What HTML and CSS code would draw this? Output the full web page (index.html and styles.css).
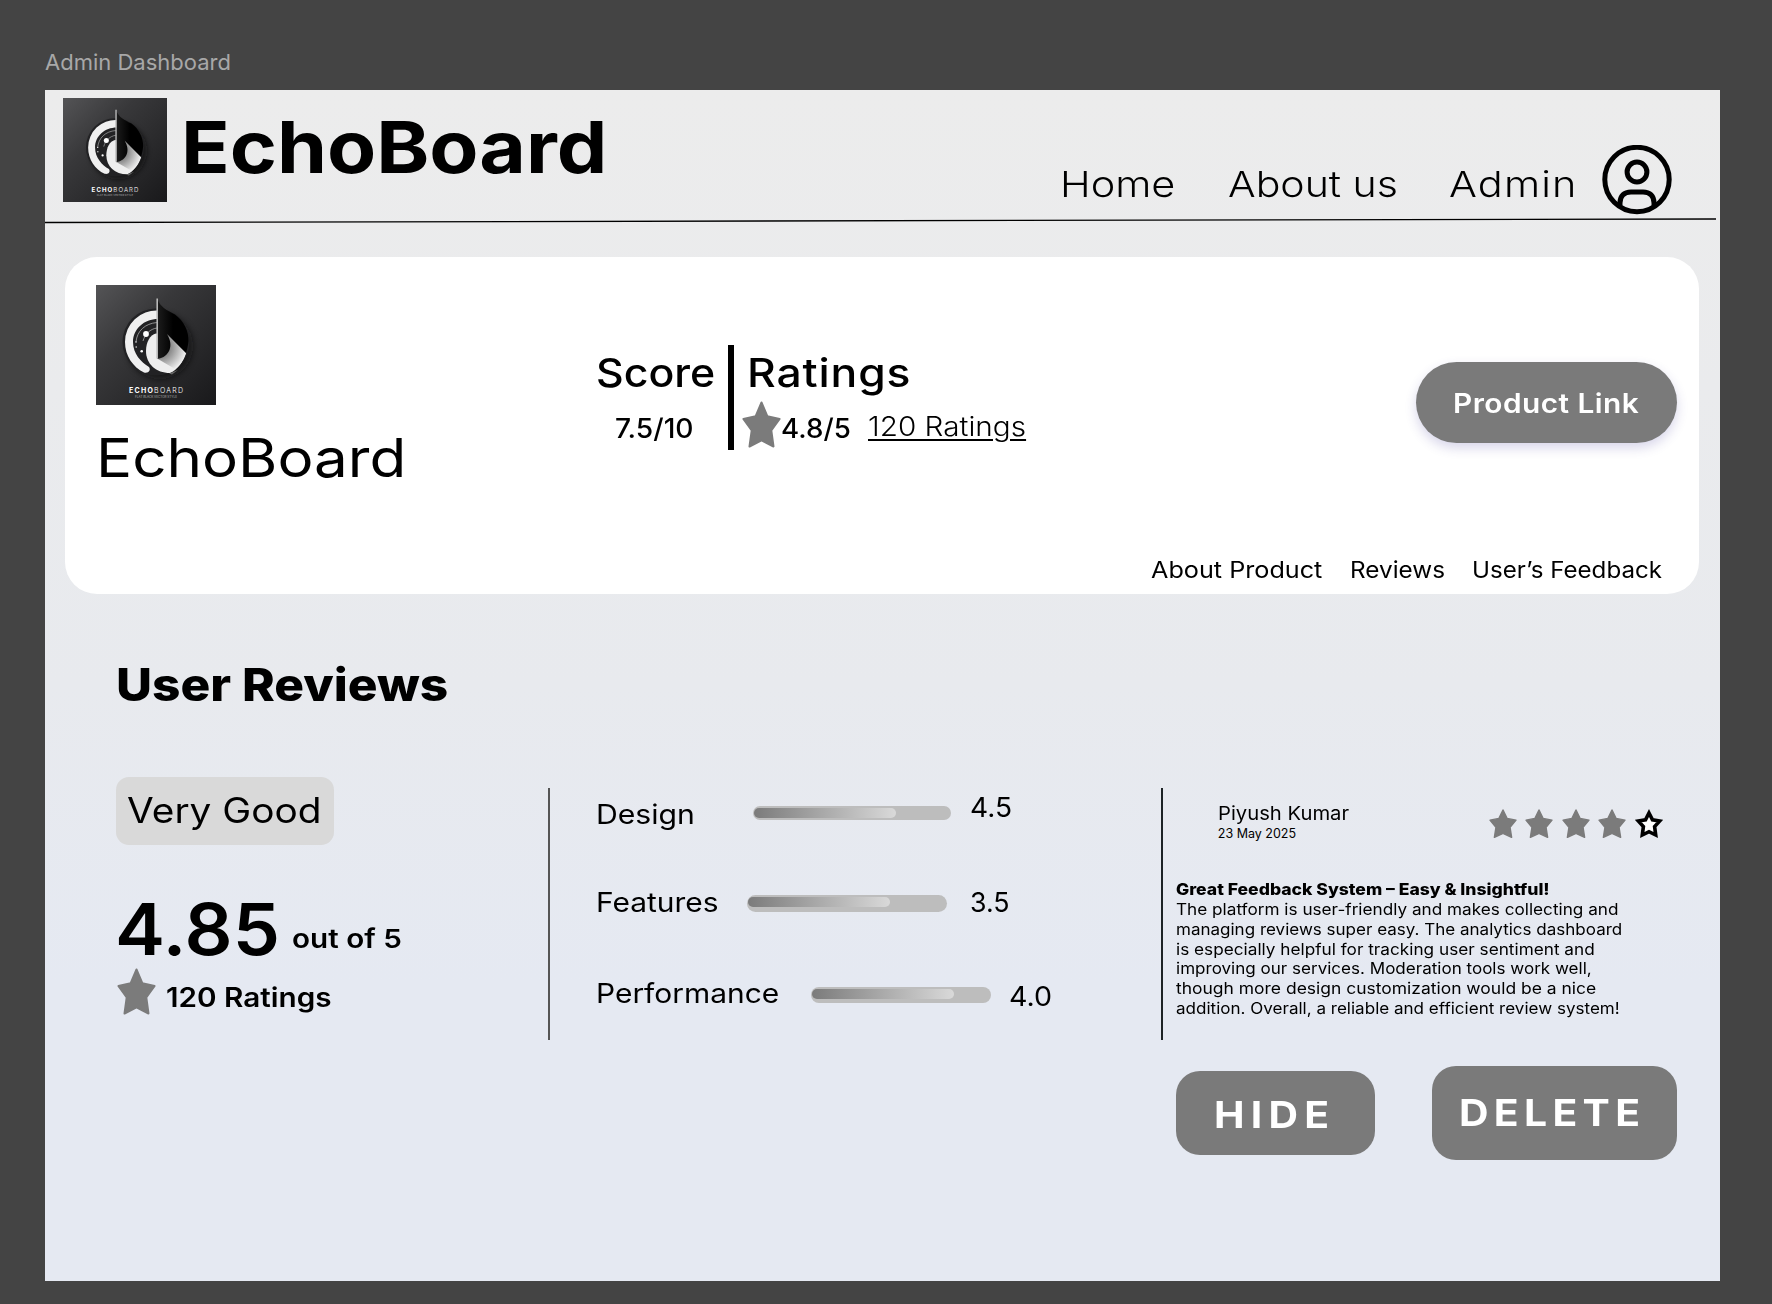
FILE: index.html
```html
<!DOCTYPE html>
<html lang="en">
<head>
<meta charset="utf-8">
<title>EchoBoard – Admin Dashboard</title>
<link rel="stylesheet" href="styles.css">
</head>
<body>
<svg class="defs" width="0" height="0" aria-hidden="true">
  <defs>
    <linearGradient id="tile" x1="0" y1="0" x2="1" y2="1"><stop offset="0" stop-color="#545456"/><stop offset=".35" stop-color="#38383a"/><stop offset="1" stop-color="#19191b"/></linearGradient>
    <linearGradient id="blade" x1="0" y1="0" x2="1" y2="0"><stop offset="0" stop-color="#1c1c1c"/><stop offset=".5" stop-color="#000"/></linearGradient>
    <radialGradient id="fold" gradientUnits="userSpaceOnUse" cx="64" cy="62" r="26"><stop offset=".3" stop-color="#777"/><stop offset="1" stop-color="#ededed"/></radialGradient>
    <filter id="soft" x="-30%" y="-30%" width="160%" height="160%"><feGaussianBlur stdDeviation="3"/></filter>
    <symbol id="logo" viewBox="0 0 120 120">
      <rect width="120" height="120" fill="url(#tile)"/>
      <circle cx="64" cy="61" r="33" fill="#0d0d0e" opacity=".65" filter="url(#soft)"/>
      <circle cx="60" cy="57" r="33.5" fill="#222224"/>
      <path d="M62 25.500A31.500 31.500 0 0 0 29 57C29 71 37 82 48 87.500C53 88.500 55 85 53 82C45 77 37 69 37 57C37 44 48 34 62 34Z" fill="#f0f0f0"/>
      <path d="M40 57C41 46 49 38.500 61 37.500M47 56C49 49 54 44 61 43" fill="none" stroke="#aaa" stroke-width=".8"/>
      <circle cx="50" cy="49" r="2.900" fill="#fff"/><circle cx="45.700" cy="66.300" r="1.300" fill="#fff"/><circle cx="40" cy="57" r=".8" fill="#ddd"/><circle cx="40.200" cy="62" r=".8" fill="#ddd"/>
      <path d="M60 48.500C54 50 50 57 50 66C50 79 60 88 74 88C81 85 87 77 90 68L71 49Z" fill="#eee"/>
      <path d="M71 49L90 68C88 75 84 81 79 84L62 74C71 69 76 60 71 49Z" fill="url(#fold)"/>
      <path d="M73 88.500L82 85L76 89.500Z" fill="#666"/>
      <path d="M61.500 14C64 22 71 25.500 79 29.500C88 36 93 47 92.500 56C92 61 91 65 90 68L71 49C78 60 74 72 61.500 74Z" fill="url(#blade)"/>
      <path d="M60.400 13.500H62V73.500H60.400Z" fill="#b9b9b9"/>
      <text x="33" y="108" class="logo-name" textLength="54"><tspan font-weight="700">ECHO</tspan><tspan font-weight="300">BOARD</tspan></text>
      <text x="39" y="113.200" class="logo-tag" textLength="42" lengthAdjust="spacingAndGlyphs">FLAT BLACK VECTOR STYLE</text>
    </symbol>
    <symbol id="star" viewBox="0 0 39 47" preserveAspectRatio="none">
      <path d="M19.500 1.500L25.300 15.200L37.600 18L29.300 29.300L31.500 45.500L19.500 39.300L7.500 45.500L9.700 29.300L1.400 18L13.700 15.200Z" fill="#7b7b7b" stroke="#7b7b7b" stroke-width="2" stroke-linejoin="round"/>
    </symbol>
  </defs>
</svg>

<div class="canvas-label">Admin Dashboard</div>
<div class="frame">
  <header class="topbar">
    <svg class="topbar-logo"><use href="#logo"/></svg>
    <h1 class="site-title wide">EchoBoard</h1>
    <nav class="nav">
      <a class="nav-home wide">Home</a>
      <a class="nav-about wide">About us</a>
      <a class="nav-admin wide">Admin</a>
      <svg class="profile" viewBox="0 0 70 70" fill="none" stroke="#000" stroke-width="5">
        <circle cx="35" cy="34.500" r="32.200"/>
        <circle cx="35" cy="27" r="9.900"/>
        <path d="M18 60.500V58C18 51 22 47 29 47H41C48 47 52 51 52 58V60.500"/>
      </svg>
    </nav>
    <svg class="topbar-rule" viewBox="0 0 1675 6"><path d="M0 4.500L1672 1" stroke="#000" stroke-width="1.300"/></svg>
  </header>

  <section class="card">
    <div class="card-main">
      <div class="brand">
        <svg class="brand-logo"><use href="#logo"/></svg>
        <div class="brand-name wide">EchoBoard</div>
      </div>
      <div class="score">
        <div class="stat-title score-title wide">Score</div>
        <div class="stat-value score-value wide">7.5/10</div>
      </div>
      <div class="stat-divider"></div>
      <div class="ratings">
        <div class="stat-title ratings-title wide">Ratings</div>
        <div class="ratings-row">
          <svg class="star-lg"><use href="#star"/></svg>
          <span class="stat-value wide">4.8/5</span>
          <a class="ratings-link wide">120 Ratings</a>
        </div>
      </div>
      <a class="product-link"><span class="wide">Product Link</span></a>
    </div>
    <nav class="card-links">
      <a class="link-about wide">About Product</a>
      <a class="link-reviews wide">Reviews</a>
      <a class="link-feedback wide">User’s Feedback</a>
    </nav>
  </section>

  <h2 class="section-title wide">User Reviews</h2>
  <section class="reviews">
    <div class="summary">
      <div class="badge"><span class="wide">Very Good</span></div>
      <div class="total"><span class="total-score wide">4.85</span><span class="total-max wide">out of 5</span></div>
      <div class="count"><svg class="star-lg"><use href="#star"/></svg><span class="count-text wide">120 Ratings</span></div>
    </div>
    <div class="rule"></div>
    <div class="metrics">
      <div class="metric design"><span class="metric-name wide">Design</span><span class="track"><span class="fill"></span></span><span class="metric-value wide">4.5</span></div>
      <div class="metric features"><span class="metric-name wide">Features</span><span class="track"><span class="fill"></span></span><span class="metric-value wide">3.5</span></div>
      <div class="metric performance"><span class="metric-name wide">Performance</span><span class="track"><span class="fill"></span></span><span class="metric-value wide">4.0</span></div>
    </div>
    <div class="rule rule-dark"></div>
    <article class="review">
      <div class="review-head">
        <div class="author">
          <div class="author-name wide">Piyush Kumar</div>
          <div class="author-date">23 May 2025</div>
        </div>
        <div class="stars">
          <svg class="star-sm"><use href="#star"/></svg>
          <svg class="star-sm"><use href="#star"/></svg>
          <svg class="star-sm"><use href="#star"/></svg>
          <svg class="star-sm"><use href="#star"/></svg>
          <svg class="star-sm" viewBox="0 0 28 29.300"><path d="M14 4L17.500 10.900L24.600 12.100L19.600 17.600L20.700 26L14 22.700L7.300 26L8.400 17.600L3.400 12.100L10.500 10.900Z" fill="#fff" stroke="#000" stroke-width="3.600"/></svg>
        </div>
      </div>
      <div class="review-title wide">Great Feedback System – Easy &amp; Insightful!</div>
      <p class="review-text">
        <span class="wide">The platform is user-friendly and makes collecting and</span>
        <span class="wide">managing reviews super easy. The analytics dashboard</span>
        <span class="wide">is especially helpful for tracking user sentiment and</span>
        <span class="wide">improving our services. Moderation tools work well,</span>
        <span class="wide">though more design customization would be a nice</span>
        <span class="wide">addition. Overall, a reliable and efficient review system!</span>
      </p>
      <div class="actions">
        <button class="btn btn-hide"><span class="wide">HIDE</span></button>
        <button class="btn btn-delete"><span class="wide">DELETE</span></button>
      </div>
    </article>
  </section>
</div>
</body>
</html>
```

FILE: styles.css
```css
* { box-sizing: border-box; }
body { margin: 0; height: 1304px; overflow: hidden; background: #444; color: #000; font-family: Inter, "Open Sans", sans-serif; white-space: nowrap; }
h1, h2, p { margin: 0; }
svg { display: block; flex: none; }
.defs { position: absolute; }

.wide { display: block; width: max-content; transform: scaleX(var(--w, 1.1)); transform-origin: 0 50%; }

.canvas-label { height: 90px; padding: 47px 0 0 45px; font-size: 22px; line-height: 30px; color: #a8a8a8; }
.frame { width: 1674.5px; height: 1191px; margin-left: 45px; background: linear-gradient(#ececec, #e8eaee 50%, #e5e9f2 75%, #e5e9f2); }

/* top bar */
.topbar { position: relative; display: flex; height: 132px; padding: 0 47.5px 0 18px; }
.topbar-logo { width: 104px; height: 104px; margin-top: 8px; }
.site-title { --w: 1.115; margin: 21px 0 0 13.7px; font-size: 72px; line-height: 72px; font-weight: 700; }
.nav { display: grid; grid-template-columns: 167.3px 221px 153px 70px; margin: 55px 0 0 auto; font-size: 36px; line-height: 44px; font-weight: 300; }
.nav a { padding-top: 16.8px; }
.nav-home { --w: 1.15; margin-left: -.6px; }
.nav-about { --w: 1.14; }
.nav-admin { --w: 1.15; letter-spacing: 1px; }
.profile { width: 70px; height: 70px; }
.topbar-rule { position: absolute; left: 0; bottom: -2px; width: 1674px; height: 6px; }
.logo-name { font-size: 7px; fill: #fff; }
.logo-tag { font-size: 2.8px; fill: #aaa; }

/* product card */
.card { width: 1634.5px; height: 336.3px; margin: 35.4px 0 0 19.5px; border-radius: 32px; background: #fff; }
.card-main { display: flex; align-items: flex-start; height: 298.3px; }
.brand { width: 531.5px; padding: 28px 0 0 31.5px; }
.brand-logo { width: 120px; height: 120px; }
.brand-name { --w: 1.122; margin: 22.8px 0 0 -.2px; font-size: 53.6px; line-height: 60px; font-weight: 440; }
.score { width: 132px; padding-top: 92px; }
.stat-title { font-size: 39.5px; line-height: 48px; font-weight: 450; }
.score-title { --w: 1.085; }
.ratings-title { --w: 1.125; margin-left: 6.5px; letter-spacing: .76px; }
.stat-value { --w: 1.026; font-size: 27px; line-height: 32px; font-weight: 500; }
.score-value { --w: 1.044; margin: 15.4px 0 0 19px; }
.stat-divider { width: 5.7px; height: 105px; margin-top: 87.5px; background: #000; }
.ratings { width: 300px; padding: 92px 0 0 7.3px; }
.ratings-row { display: grid; grid-template-columns: 39.3px 86.3px 1fr; margin: 3.5px 0 0 1px; }
.star-lg { width: 39px; height: 47px; }
.ratings-row .stat-value { padding-top: 11.9px; }
.ratings-link { --w: 1.1; padding-top: 9.9px; font-size: 27px; line-height: 32px; font-weight: 280; text-decoration: underline; text-decoration-thickness: 1.5px; text-underline-offset: 3px; }
.product-link { width: 260.7px; height: 81.3px; margin: 104.7px 22.5px 0 auto; padding-left: 37.5px; border-radius: 41px; background: #7a7a7a; color: #fff; font-size: 26.5px; line-height: 82px; font-weight: 570; letter-spacing: .4px; box-shadow: 0 5px 12px rgba(60, 50, 150, .2); }
.product-link .wide { --w: 1.125; }
.card-links { display: grid; grid-template-columns: 199.2px 121.5px 1fr; padding-left: 1086px; font-size: 22.6px; line-height: 28px; }
.link-about { --w: 1.115; }
.link-reviews { --w: 1.076; }
.link-feedback { --w: 1.068; margin-left: .7px; }

/* reviews */
.section-title { --w: 1.1025; margin: 64.5px 0 0 70.5px; font-size: 45px; line-height: 54px; font-weight: 800; }
.reviews { display: flex; align-items: flex-start; margin: 65.2px 0 0 71px; }
.summary { width: 432.3px; }
.badge { width: 218.2px; height: 67.5px; padding-left: 11px; border-radius: 13px; background: #d9d9d9; font-size: 35px; line-height: 67px; font-weight: 440; }
.badge .wide { --w: 1.108; }
.total { display: grid; grid-template-columns: 176px 1fr; height: 72px; margin-top: 48px; font-weight: 600; }
.total-score { --w: 1.059; margin-left: -.7px; font-size: 71px; line-height: 72px; }
.total-max { --w: 1.14; padding-top: 29.9px; font-size: 26px; line-height: 32px; font-weight: 570; }
.count { display: flex; margin: 3px 0 0 .6px; }
.count-text { --w: 1.12; margin: 12.7px 0 0 10px; font-size: 26.5px; line-height: 32px; font-weight: 570; }
.rule { width: 1.6px; height: 252px; margin-top: 11px; background: #555; }
.rule-dark { width: 1.3px; background: #1d2326; }

.metrics { width: 611.6px; padding: 14.9px 0 0 46.5px; }
.metric { display: grid; align-items: start; height: 32px; font-size: 27px; line-height: 32px; font-weight: 380; }
.design { grid-template-columns: 156.5px 198px 1fr; height: 39px; }
.features { grid-template-columns: 150.5px 200.5px 1fr; margin-top: 55.3px; }
.performance { grid-template-columns: 214.5px 180.5px 1fr; margin-top: 59.7px; }
.metric-name { --w: 1.108; }
.design .metric-name { --w: 1.117; padding-top: 7px; }
.track { height: 16.8px; margin-top: 8.4px; padding: 2.2px 1px; border-radius: 9px; background: #bdbdbd; }
.fill { display: block; width: 142px; height: 10px; border-radius: 5px; background: linear-gradient(90deg, #7b7b7b, #d9d9d9); }
.design .track { height: 14.3px; margin-top: 13.4px; }
.metric-value { --w: 1.042; margin-left: 19px; }
.features .metric-value { --w: .99; margin-left: 22.5px; }
.performance .metric-value { --w: 1.06; margin: 2.3px 0 0 17.2px; }

.review { padding-left: 13.5px; }
.review-head { display: flex; height: 102.7px; padding-left: 41.5px; }
.author { width: 271px; padding-top: 24.6px; }
.author-name { --w: 1.094; font-size: 18.5px; line-height: 22px; font-weight: 380; }
.author-date { margin-top: 1.9px; font-size: 12.5px; line-height: 16px; }
.stars { display: flex; gap: 8.5px; padding-top: 31.9px; }
.star-sm { width: 28px; height: 29.3px; }
.review-title, .review-text { font-size: 15.6px; line-height: 19.83px; }
.review-title { --w: 1.1266; font-weight: 800; }
.review-text span:nth-child(1) { --w: 1.101; }
.review-text span:nth-child(2) { --w: 1.091; }
.review-text span:nth-child(3) { --w: 1.103; }
.review-text span:nth-child(4) { --w: 1.093; }
.review-text span:nth-child(5) { --w: 1.12; }
.review-text span:nth-child(6) { --w: 1.093; }
.actions { display: flex; align-items: flex-start; margin-top: 47.3px; }
.btn { border: 0; border-radius: 24px; background: #7a7a7a; color: #fff; font: 700 36.5px Inter, sans-serif; text-align: left; }
.btn .wide { --w: 1.12; }
.btn-hide { width: 199px; height: 84px; margin-top: 4.7px; padding: 4.4px 0 0 38px; letter-spacing: 5.55px; }
.btn-delete { width: 244.6px; height: 93.4px; margin-left: 57px; padding: 0 0 0 26.6px; letter-spacing: 4.76px; }
```
